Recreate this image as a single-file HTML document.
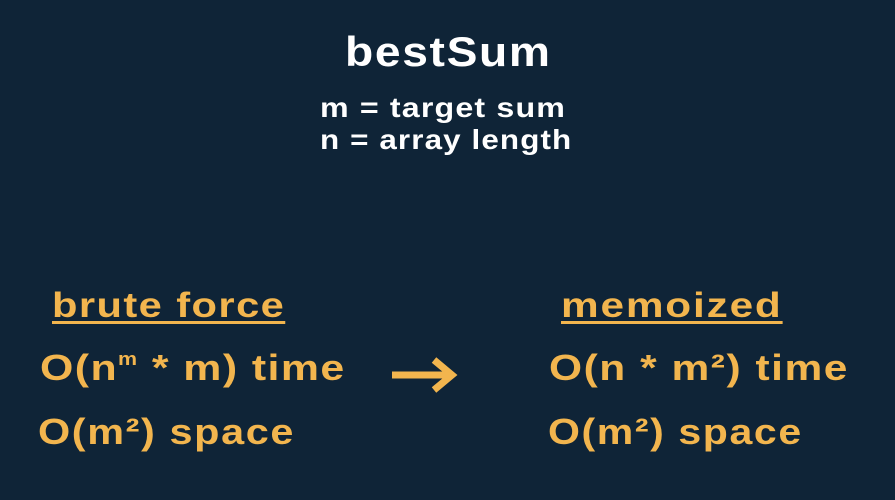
<!DOCTYPE html>
<html><head><meta charset="utf-8"><style>
html,body{margin:0;padding:0}
body{width:895px;height:500px;background:#0f2437;position:relative;overflow:hidden;font-family:"Liberation Sans",sans-serif;font-weight:bold}
.t{position:absolute;white-space:nowrap;line-height:1;transform-origin:0 50%}
.w{color:#fff}
.o{color:#f2b54e}
sup{font-size:0.5em;vertical-align:0;position:relative;top:-0.85em}
</style></head><body>
<div class="t w" style="left:345px;top:31px;font-size:42px;letter-spacing:1.5px;transform:scaleX(1.1)">bestSum</div>
<div class="t w" style="left:320px;top:94px;font-size:28px;letter-spacing:1px;transform:scaleX(1.15)">m = target sum</div>
<div class="t w" style="left:320px;top:126px;font-size:28px;letter-spacing:1px;transform:scaleX(1.12)">n = array length</div>

<div class="t o" style="left:52px;top:288px;font-size:35px;letter-spacing:1.2px;text-decoration:underline;text-decoration-thickness:3px;text-underline-offset:4px;transform:scaleX(1.19)">brute force</div>
<div class="t o" style="left:40px;top:350px;font-size:36px;letter-spacing:1.2px;transform:scaleX(1.19)">O(n<sup>m</sup> * m) time</div>
<div class="t o" style="left:38px;top:414px;font-size:36px;letter-spacing:1.4px;transform:scaleX(1.15)">O(m²) space</div>

<svg style="position:absolute;left:390px;top:355px" width="68" height="40" viewBox="0 0 68 40">
<path d="M2 20 H60 M44 5 L62 20 L44 35" stroke="#f2b54e" stroke-width="7" fill="none"/>
</svg>

<div class="t o" style="left:561px;top:288px;font-size:35px;letter-spacing:1.5px;text-decoration:underline;text-decoration-thickness:3px;text-underline-offset:4px;transform:scaleX(1.21)">memoized</div>
<div class="t o" style="left:549px;top:350px;font-size:36px;letter-spacing:1.3px;transform:scaleX(1.18)">O(n * m²) time</div>
<div class="t o" style="left:548px;top:414px;font-size:36px;letter-spacing:1.4px;transform:scaleX(1.14)">O(m²) space</div>
</body></html>
